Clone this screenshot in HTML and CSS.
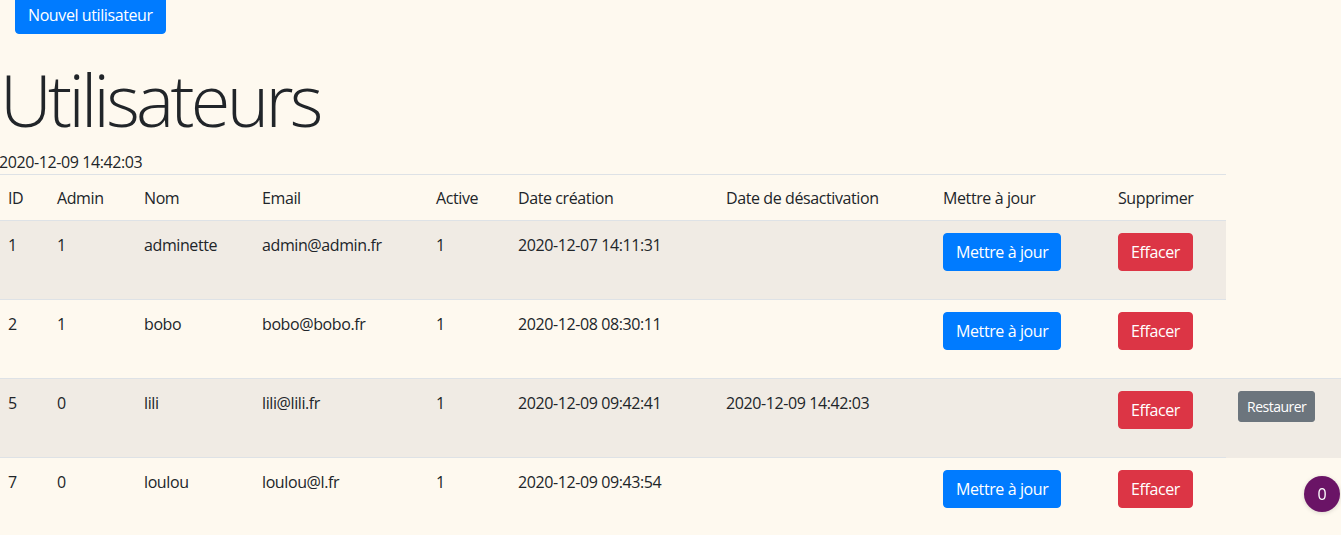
FILE: index.html
```html
<!DOCTYPE html>
<html lang="fr">
<head>
<meta charset="utf-8">
<title>Utilisateurs</title>
<link rel="stylesheet" href="styles.css">
</head>
<body>
<div class="top">
  <a class="btn btn-primary btn-new" href="#">Nouvel utilisateur</a>
</div>
<h1 class="title">Utilisateurs</h1>
<div class="stamp">2020-12-09 14:42:03</div>
<table class="users">
  <colgroup>
    <col class="c1"><col class="c2"><col class="c3"><col class="c4"><col class="c5">
    <col class="c6"><col class="c7"><col class="c8"><col class="c9"><col class="c10">
  </colgroup>
  <thead>
    <tr>
      <th>ID</th><th>Admin</th><th>Nom</th><th>Email</th><th>Active</th>
      <th>Date création</th><th>Date de désactivation</th><th>Mettre à jour</th><th>Supprimer</th>
    </tr>
  </thead>
  <tbody>
    <tr class="odd">
      <td>1</td><td>1</td><td>adminette</td><td>admin@admin.fr</td><td>1</td>
      <td>2020-12-07 14:11:31</td><td></td>
      <td><form><button class="btn btn-primary" type="button">Mettre à jour</button></form></td>
      <td><form><button class="btn btn-danger" type="button">Effacer</button></form></td>
    </tr>
    <tr>
      <td>2</td><td>1</td><td>bobo</td><td>bobo@bobo.fr</td><td>1</td>
      <td>2020-12-08 08:30:11</td><td></td>
      <td><form><button class="btn btn-primary" type="button">Mettre à jour</button></form></td>
      <td><form><button class="btn btn-danger" type="button">Effacer</button></form></td>
    </tr>
    <tr class="odd">
      <td>5</td><td>0</td><td>lili</td><td>lili@lili.fr</td><td>1</td>
      <td>2020-12-09 09:42:41</td><td>2020-12-09 14:42:03</td>
      <td></td>
      <td><form><button class="btn btn-danger" type="button">Effacer</button></form></td>
      <td><button class="btn btn-secondary btn-sm" type="button">Restaurer</button></td>
    </tr>
    <tr>
      <td>7</td><td>0</td><td>loulou</td><td>loulou@l.fr</td><td>1</td>
      <td>2020-12-09 09:43:54</td><td></td>
      <td><form><button class="btn btn-primary" type="button">Mettre à jour</button></form></td>
      <td><form><button class="btn btn-danger" type="button">Effacer</button></form></td>
    </tr>
  </tbody>
</table>
<div class="counter">0</div>
</body>
</html>
```

FILE: styles.css
```css
html, body {
  margin: 0;
  padding: 0;
  overflow: hidden;
}
body {
  background: #fef9ef;
  color: #212529;
  font-family: "Open Sans", "Noto Sans", sans-serif;
  font-size: 16px;
  line-height: 1.5;
  letter-spacing: -0.4px;
}
.top {
  padding-left: 15px;
  margin-top: -4px;
}
.btn {
  display: inline-block;
  font-family: inherit;
  font-size: 16px;
  line-height: 24px;
  letter-spacing: -0.4px;
  padding: 6px 12px;
  border: 1px solid transparent;
  border-radius: 4px;
  color: #fff;
  text-decoration: none;
  cursor: pointer;
}
.btn-primary { background: #007bff; border-color: #007bff; }
.btn-danger { background: #dc3545; border-color: #dc3545; }
.btn-secondary { background: #6c757d; border-color: #6c757d; }
.btn-sm {
  font-size: 14px;
  line-height: 21px;
  letter-spacing: -0.5px;
  padding: 4px 8px;
  border-radius: 3px;
}
.title {
  margin: 0 0 8px 0;
  font-family: "Open Sans", sans-serif;
  font-size: 72px;
  font-weight: 300;
  letter-spacing: -3.7px;
  line-height: 1.2;
  padding-top: 22px;
}
.stamp {
  margin-left: -1px;
}
.users {
  border-collapse: collapse;
  table-layout: fixed;
  width: 1349px;
  margin-left: -4px;
}
.c1 { width: 49px; }
.c2 { width: 87px; }
.c3 { width: 118px; }
.c4 { width: 174px; }
.c5 { width: 82px; }
.c6 { width: 208px; }
.c7 { width: 217px; }
.c8 { width: 175px; }
.c9 { width: 120px; }
.c10 { width: 119px; }
.users th, .users td {
  text-align: left;
  vertical-align: top;
  font-weight: 400;
  padding: 12px;
  border-top: 1px solid #dee2e6;
}
.users th {
  padding-top: 11px;
  padding-bottom: 10px;
}
.users tr.odd td {
  background: #f0ebe4;
}
.users form {
  margin: 0 0 16px 0;
}
.counter {
  position: fixed;
  right: 1px;
  bottom: 23px;
  width: 36px;
  height: 36px;
  border-radius: 50%;
  background: #6a1466;
  color: #fff;
  font-size: 16px;
  line-height: 36px;
  letter-spacing: 0;
  text-align: center;
  box-shadow: 0 1px 4px rgba(0,0,0,0.15);
}
```
